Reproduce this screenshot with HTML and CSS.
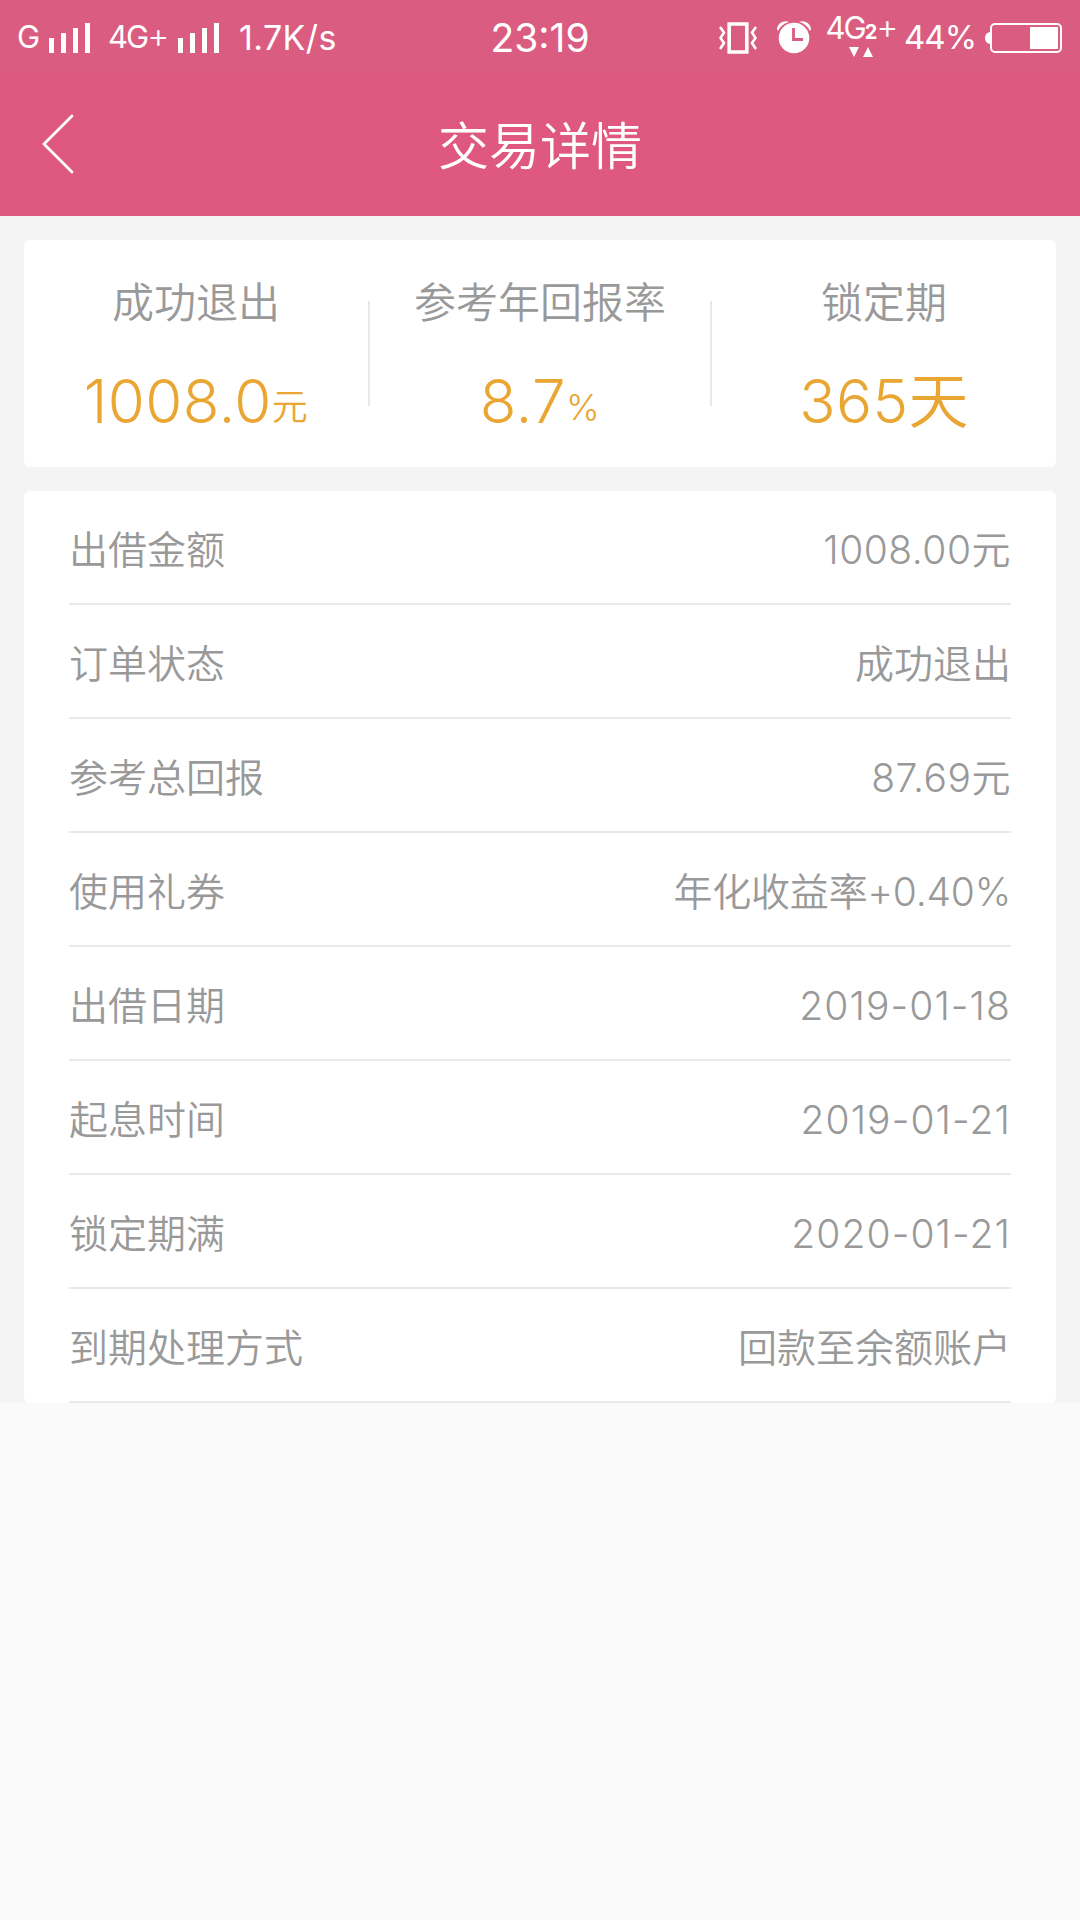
FILE: index.html
```
<!DOCTYPE html>
<html lang="zh-CN">
<head>
    <meta charset="UTF-8">
    <meta name="viewport" content="width=device-width, initial-scale=1.0">
    <title>交易详情</title>
    <link rel="stylesheet" href="styles.css">
</head>
<body>
    <div class="status-bar">
        <div class="status-left">
            <span class="net net-g">G</span>
            <svg class="signal" width="42" height="30" viewBox="0 0 42 30" fill="#fff">
                <path d="M0 15h5v15H0zM12 10h5v20h-5zM24 5h5v25h-5zM36 0h5v30h-5z"/>
            </svg>
            <span class="net net-4g">4G<i>+</i></span>
            <svg class="signal" width="42" height="30" viewBox="0 0 42 30" fill="#fff">
                <path d="M0 15h5v15H0zM12 10h5v20h-5zM24 5h5v25h-5zM36 0h5v30h-5z"/>
            </svg>
            <span class="speed">1.7K/s</span>
        </div>
        <div class="clock">23:19</div>
        <div class="status-right">
            <svg class="vibrate" width="38" height="32" viewBox="0 0 38 32" fill="none" stroke="#fff">
                <path stroke-width="3.6" d="M10.2 2h17.6v28H10.2z"/>
                <path stroke-width="2.6" d="M1 5l4 5.500-3.500 5.500L5 21l-4 6M37 5l-4 5.500 3.500 5.500L33 21l4 6"/>
            </svg>
            <svg class="alarm" width="34" height="33" viewBox="0 0 34 33">
                <path fill="#fff" d="M0 9C0 3 6 -1.500 12 1Q4 3 1.500 9.500zM34 9C34 3 28 -1.500 22 1Q30 3 32.500 9.500z"/>
                <circle cx="17" cy="17" r="15.300" fill="#fff"/>
                <path fill="none" stroke="#db5c81" stroke-width="2.800" d="M16.500 7v11.500H26"/>
            </svg>
            <div class="data">
                <div class="data-text">4G<b>2</b><i>+</i></div>
                <svg class="data-arrows" width="24" height="10" viewBox="0 0 24 10" fill="#fff">
                    <path d="M0 0h10L5 10zM14 10h10L19 0z"/>
                </svg>
            </div>
            <span class="percent">44%</span>
            <svg class="battery" width="78" height="30" viewBox="0 0 78 30">
                <path fill="#fff" d="M5 9v12Q0 20 0 15T5 9z"/>
                <rect x="6" y="1" width="70" height="28" rx="4" fill="none" stroke="#fff" stroke-width="2"/>
                <path fill="#fff" d="M45 4h28v22H45z"/>
            </svg>
        </div>
    </div>

    <div class="header">
        <svg class="back" width="34" height="62" viewBox="0 0 34 62" fill="none" stroke="#fff" stroke-width="2.800" stroke-linecap="round" stroke-linejoin="round">
            <path d="M30 3L2 31l28 28"/>
        </svg>
        <h1>交易详情</h1>
    </div>

    <div class="content">
        <div class="card summary">
            <div class="summary-item">
                <p class="label">成功退出</p>
                <p class="value">1008.0<small>元</small></p>
            </div>
            <div class="summary-item">
                <p class="label">参考年回报率</p>
                <p class="value">8.7<small>%</small></p>
            </div>
            <div class="summary-item">
                <p class="label">锁定期</p>
                <p class="value">365天</p>
            </div>
        </div>

        <div class="card details">
            <div class="row"><span>出借金额</span><span class="amount">1008.00元</span></div>
            <div class="row"><span>订单状态</span><span>成功退出</span></div>
            <div class="row"><span>参考总回报</span><span class="amount">87.69元</span></div>
            <div class="row"><span>使用礼券</span><span class="rate">年化收益率+0.40%</span></div>
            <div class="row"><span>出借日期</span><span class="date">2019-01-18</span></div>
            <div class="row"><span>起息时间</span><span class="date">2019-01-21</span></div>
            <div class="row"><span>锁定期满</span><span class="date">2020-01-21</span></div>
            <div class="row"><span>到期处理方式</span><span>回款至余额账户</span></div>
        </div>
    </div>
</body>
</html>
```
FILE: styles.css
```
* {
    box-sizing: border-box;
}

body {
    font-family: Inter, "Noto Sans CJK SC", sans-serif;
    font-weight: 350;
    background-color: #fafafa;
    margin: 0;
    padding: 0;
}

h1, p {
    margin: 0;
    font-weight: 350;
}

i {
    font-style: normal;
}

svg {
    display: block;
    flex: none;
}

.status-bar {
    display: grid;
    grid-template-columns: 480px 120px 480px;
    height: 72px;
    background-color: #db5c81;
    color: #fff;
    font-weight: 400;
    white-space: nowrap;
}

.status-left, .status-right {
    display: flex;
    align-items: center;
}

.status-left {
    padding-left: 17px;
}

.net {
    font-size: 31px;
    line-height: 68px;
    padding-bottom: 2px;
}

.net-g {
    width: 32px;
    letter-spacing: -1px;
}

.net-4g {
    width: 70px;
    margin-left: 17px;
    letter-spacing: -2px;
}

.net-4g i, .data-text i {
    font-size: 34px;
    font-weight: 350;
    line-height: 0;
}

.speed {
    width: 100px;
    margin-left: 19px;
    font-size: 34px;
    line-height: 74px;
    letter-spacing: 0.4px;
}

.clock {
    text-align: center;
    font-size: 39px;
    line-height: 75px;
}

.status-right {
    justify-content: flex-end;
    padding-right: 17px;
}

.alarm {
    margin-left: 20px;
}

.data {
    display: flex;
    flex-direction: column;
    align-items: center;
    width: 72px;
    margin-left: 14px;
    padding-bottom: 5px;
}

.data-text {
    font-size: 31px;
    line-height: 29px;
    letter-spacing: -2px;
}

.data-text b {
    font-size: 20px;
    font-weight: 700;
    letter-spacing: -1px;
}

.percent {
    width: 72px;
    margin-left: 7px;
    font-size: 33px;
    line-height: 72px;
    padding-bottom: 1px;
    letter-spacing: -1px;
}

.battery {
    margin-left: 9px;
}

.header {
    display: grid;
    grid-template-columns: 120px 1fr 120px;
    align-items: center;
    height: 144px;
    background-color: #df587f;
    color: #fff;
}

.back {
    margin-left: 42px;
}

.header h1 {
    padding-top: 5px;
    font-size: 51px;
    line-height: 139px;
    text-align: center;
}

.content {
    padding: 24px 24px 0;
    background-color: #f4f4f4;
}

.card {
    background-color: #fff;
    border-radius: 6px;
}

.summary {
    display: grid;
    grid-template-columns: 346px 342px 344px;
    height: 227px;
    margin-bottom: 24px;
    padding-top: 61px;
}

.summary-item {
    height: 105px;
    text-align: center;
    border-right: 2px solid #e8e8e8;
}

.summary-item:last-child {
    border-right: none;
}

.label {
    margin-top: -28px;
    font-size: 42px;
    line-height: 60px;
    color: #999;
}

.value {
    margin-top: 28px;
    font-size: 60px;
    line-height: 80px;
    letter-spacing: 0.4px;
    color: #e9a632;
}

.value small {
    font-size: 36px;
    line-height: 0;
    vertical-align: 3px;
}

.details {
    padding: 0 45px;
}

.row {
    display: flex;
    justify-content: space-between;
    height: 114px;
    padding-top: 3px;
    border-bottom: 2px solid #e8e8e8;
    font-size: 39px;
    line-height: 111px;
    color: #999;
}

.amount {
    letter-spacing: 0.5px;
}

.rate {
    letter-spacing: -0.2px;
}

.date {
    letter-spacing: 1.1px;
}
```
